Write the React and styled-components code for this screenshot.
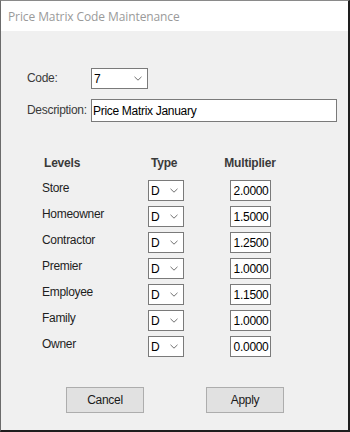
import styled, { createGlobalStyle } from 'styled-components';

const GlobalStyle = createGlobalStyle`
  html, body {
    margin: 0;
    padding: 0;
    background: #f0f0f0;
  }
  * {
    box-sizing: border-box;
  }
`;

const levels = [
  { name: 'Store', type: 'D', multiplier: '2.0000' },
  { name: 'Homeowner', type: 'D', multiplier: '1.5000' },
  { name: 'Contractor', type: 'D', multiplier: '1.2500' },
  { name: 'Premier', type: 'D', multiplier: '1.0000' },
  { name: 'Employee', type: 'D', multiplier: '1.1500' },
  { name: 'Family', type: 'D', multiplier: '1.0000' },
  { name: 'Owner', type: 'D', multiplier: '0.0000' },
];

const Chevron = () => (
  <svg width="8" height="5" viewBox="0 0 8 5">
    <path d="M0.5 0.8 L4 4.2 L7.5 0.8" fill="none" stroke="#707070" strokeWidth="1" />
  </svg>
);

const ComboBox = ({ value, width }) => (
  <ComboStyled width={width}>
    <span>{value}</span>
    <Chevron />
  </ComboStyled>
);

const App = () => {
  return (
    <>
      <GlobalStyle />
      <Window>
        <TitleBar>Price Matrix Code Maintenance</TitleBar>
        <Body>
          <FieldRow>
            <FieldLabel>Code:</FieldLabel>
            <ComboBox value="7" width={57} />
          </FieldRow>
          <FieldRow tall>
            <FieldLabel>Description:</FieldLabel>
            <TextBox>Price Matrix January</TextBox>
          </FieldRow>

          <LevelsGrid>
            <HeaderCell indent={2}>Levels</HeaderCell>
            <HeaderCell indent={3}>Type</HeaderCell>
            <HeaderCell center>Multiplier</HeaderCell>
            {levels.map((level) => (
              <LevelRow key={level.name}>
                <LevelName>{level.name}</LevelName>
                <ComboBox value={level.type} width={36} />
                <NumberBox>{level.multiplier}</NumberBox>
              </LevelRow>
            ))}
          </LevelsGrid>

          <ButtonBar>
            <Button>Cancel</Button>
            <Button>Apply</Button>
          </ButtonBar>
        </Body>
      </Window>
    </>
  );
};

const Window = styled.div`
  width: 350px;
  height: 432px;
  display: flex;
  flex-direction: column;
  border-left: 1px solid #6b6b6b;
  border-top: 1px solid #8a8a8a;
  border-right: 2px solid #1e1e1e;
  border-bottom: 2px solid #1e1e1e;
  background: #f0f0f0;
  font-family: 'Liberation Sans', Arial, sans-serif;
  font-size: 12px;
  letter-spacing: -0.3px;
`;

const TitleBar = styled.div`
  height: 30px;
  flex-shrink: 0;
  background: #ffffff;
  padding-left: 7px;
  display: flex;
  align-items: center;
  font-family: 'Open Sans', 'Noto Sans', sans-serif;
  font-size: 12px;
  letter-spacing: -0.1px;
  color: #9a9a9a;
`;

const Body = styled.div`
  flex: 1;
  padding: 37px 0 0 26px;
  display: flex;
  flex-direction: column;
`;

const FieldRow = styled.div`
  display: flex;
  align-items: center;
  height: ${({ tall }) => (tall ? '23px' : '21px')};
  margin-bottom: 10px;
`;

const FieldLabel = styled.div`
  width: 64px;
  color: #3a3a3a;
  padding-bottom: 2px;
`;

const inputBox = `
  background: #ffffff;
  border: 1px solid #7a7a7a;
  color: #000000;
  display: flex;
  align-items: center;
`;

const ComboStyled = styled.div`
  ${inputBox}
  width: ${({ width }) => width}px;
  height: 21px;
  padding: 0 5px 0 2px;
  justify-content: space-between;
`;

const TextBox = styled.div`
  ${inputBox}
  width: 246px;
  height: 23px;
  padding-left: 1px;
`;

const LevelsGrid = styled.div`
  display: grid;
  grid-template-columns: 106px 76px 52px;
  row-gap: 5px;
  margin: 23px 0 0 15px;
`;

const HeaderCell = styled.div`
  font-weight: bold;
  color: #3a3a3a;
  line-height: 16px;
  padding-bottom: 4px;
  padding-left: ${({ indent }) => indent || 0}px;
  text-align: ${({ center }) => (center ? 'center' : 'left')};
  letter-spacing: -0.2px;
`;

const LevelRow = styled.div`
  display: contents;
`;

const LevelName = styled.div`
  color: #1e1e1e;
  line-height: 14px;
  padding-top: 1px;
`;

const NumberBox = styled.div`
  ${inputBox}
  justify-self: center;
  width: 41px;
  height: 21px;
  justify-content: flex-end;
  padding-right: 1px;
`;

const ButtonBar = styled.div`
  display: flex;
  gap: 62px;
  margin: 30px 0 0 39px;
`;

const Button = styled.div`
  width: 78px;
  height: 26px;
  background: #e1e1e1;
  border: 1px solid #adadad;
  display: flex;
  align-items: center;
  justify-content: center;
  color: #1a1a1a;
`;

export default App;
